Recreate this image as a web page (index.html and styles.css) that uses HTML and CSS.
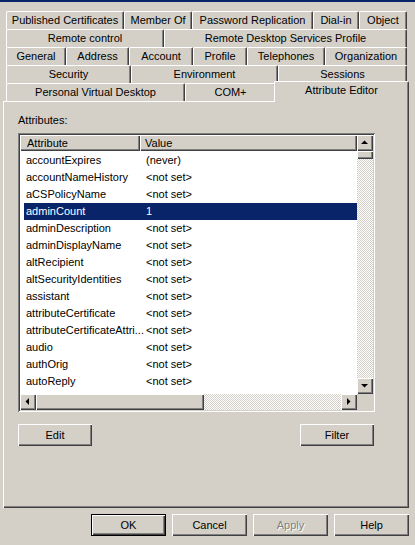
FILE: index.html
```html
<!DOCTYPE html>
<html>
<head>
<meta charset="utf-8">
<link rel="stylesheet" href="styles.css">
</head>
<body>
<div class="titlebar"></div>
<div class="tabs">
  <div class="tabrow">
    <div class="tab w118">Published Certificates</div>
    <div class="tab w68">Member Of</div>
    <div class="tab w121">Password Replication</div>
    <div class="tab w46">Dial-in</div>
    <div class="tab w48">Object</div>
  </div>
  <div class="tabrow">
    <div class="tab w158">Remote control</div>
    <div class="tab w243">Remote Desktop Services Profile</div>
  </div>
  <div class="tabrow">
    <div class="tab w60">General</div>
    <div class="tab w63">Address</div>
    <div class="tab w64">Account</div>
    <div class="tab w54">Profile</div>
    <div class="tab w78">Telephones</div>
    <div class="tab w82">Organization</div>
  </div>
  <div class="tabrow">
    <div class="tab w125">Security</div>
    <div class="tab w147">Environment</div>
    <div class="tab w129">Sessions</div>
  </div>
  <div class="tabrow">
    <div class="tab w179">Personal Virtual Desktop</div>
    <div class="tab w91">COM+</div>
    <div class="tab sel">Attribute Editor</div>
  </div>
</div>
<div class="panel">
  <div class="label">Attributes:</div>
  <div class="listbox">
    <div class="lv">
      <div class="lv-main">
        <div class="header">
          <div class="hcell hattr">Attribute</div>
          <div class="hcell hval">Value</div>
        </div>
        <div class="rows">
          <div class="row"><span class="c1">accountExpires</span><span class="c2">(never)</span></div>
          <div class="row"><span class="c1">accountNameHistory</span><span class="c2">&lt;not set&gt;</span></div>
          <div class="row"><span class="c1">aCSPolicyName</span><span class="c2">&lt;not set&gt;</span></div>
          <div class="row selected"><span class="c1">adminCount</span><span class="c2">1</span></div>
          <div class="row"><span class="c1">adminDescription</span><span class="c2">&lt;not set&gt;</span></div>
          <div class="row"><span class="c1">adminDisplayName</span><span class="c2">&lt;not set&gt;</span></div>
          <div class="row"><span class="c1">altRecipient</span><span class="c2">&lt;not set&gt;</span></div>
          <div class="row"><span class="c1">altSecurityIdentities</span><span class="c2">&lt;not set&gt;</span></div>
          <div class="row"><span class="c1">assistant</span><span class="c2">&lt;not set&gt;</span></div>
          <div class="row"><span class="c1">attributeCertificate</span><span class="c2">&lt;not set&gt;</span></div>
          <div class="row"><span class="c1">attributeCertificateAttri...</span><span class="c2">&lt;not set&gt;</span></div>
          <div class="row"><span class="c1">audio</span><span class="c2">&lt;not set&gt;</span></div>
          <div class="row"><span class="c1">authOrig</span><span class="c2">&lt;not set&gt;</span></div>
          <div class="row"><span class="c1">autoReply</span><span class="c2">&lt;not set&gt;</span></div>
        </div>
      </div>
      <div class="vscroll">
        <div class="sbtn"><svg width="16" height="16" viewBox="0 0 16 16"><polygon points="4,9 11,9 7.5,5.5" fill="#000"/></svg></div>
        <div class="vthumb"></div>
        <div class="track"></div>
        <div class="sbtn"><svg width="16" height="16" viewBox="0 0 16 16"><polygon points="4,6 11,6 7.5,9.5" fill="#000"/></svg></div>
      </div>
    </div>
    <div class="hrow">
      <div class="hscroll">
        <div class="sbtn"><svg width="16" height="16" viewBox="0 0 16 16"><polygon points="9,4 9,11 5.5,7.5" fill="#000"/></svg></div>
        <div class="hthumb"></div>
        <div class="track"></div>
        <div class="sbtn"><svg width="16" height="16" viewBox="0 0 16 16"><polygon points="6,4 6,11 9.5,7.5" fill="#000"/></svg></div>
      </div>
      <div class="corner"></div>
    </div>
  </div>
  <div class="panel-buttons">
    <div class="btn pbtn">Edit</div>
    <div class="btn pbtn">Filter</div>
  </div>
</div>
<div class="dlg-buttons">
  <div class="btn dbtn default">OK</div>
  <div class="btn dbtn">Cancel</div>
  <div class="btn dbtn disabled">Apply</div>
  <div class="btn dbtn">Help</div>
</div>
</body>
</html>
```

FILE: styles.css
```css
* { box-sizing: border-box; }
html, body { margin: 0; padding: 0; }
body {
  width: 415px;
  height: 545px;
  overflow: hidden;
  background: #d4d0c8;
  font-family: "Liberation Sans", Arial, sans-serif;
  font-size: 11px;
  color: #000;
}
.titlebar { height: 2px; background: #0a246a; }

.tabs { margin-top: 9px; }
.tabrow {
  display: flex;
  height: 18px;
  padding-left: 6px;
}
.tab {
  height: 18px;
  border-top: 1px solid #fff;
  border-left: 1px solid #fff;
  border-right: 1px solid #404040;
  border-radius: 2px 2px 0 0;
  box-shadow: inset -1px 0 #808080;
  text-align: center;
  line-height: 17px;
  white-space: nowrap;
  overflow: hidden;
  background: #d4d0c8;
}
.w46 { width: 46px; } .w48 { width: 48px; } .w54 { width: 54px; }
.w60 { width: 60px; } .w63 { width: 63px; } .w64 { width: 64px; }
.w68 { width: 68px; } .w78 { width: 78px; } .w82 { width: 82px; }
.w91 { width: 91px; } .w118 { width: 118px; } .w121 { width: 121px; }
.w125 { width: 125px; } .w129 { width: 129px; } .w147 { width: 147px; }
.w158 { width: 158px; } .w179 { width: 179px; } .w243 { width: 243px; }
.tab.sel {
  width: 135px;
  height: 21px;
  margin-top: -2px;
  margin-left: -2px;
  line-height: 17px;
  position: relative;
  z-index: 2;
}

.panel {
  margin-left: 3px;
  width: 406px;
  height: 407px;
  border-top: 1px solid #fff;
  border-left: 1px solid #fff;
  box-shadow: inset -1px -1px #404040, inset -2px -2px #808080;
  padding-left: 14px;
}
.label {
  margin-top: 12px;
  height: 13px;
  line-height: 13px;
  margin-bottom: 6px;
}
.listbox {
  width: 357px;
  height: 279px;
  padding: 2px;
  box-shadow: inset 1px 1px #808080, inset -1px -1px #fff, inset 2px 2px #404040, inset -2px -2px #d4d0c8;
  background: #fff;
}
.lv { display: flex; height: 259px; }
.lv-main { width: 337px; background: #fff; }
.header { display: flex; height: 16px; }
.hcell {
  height: 16px;
  line-height: 16px;
  background: #d4d0c8;
  box-shadow: inset 1px 1px #fff, inset -1px -1px #404040, inset -2px -2px #808080;
  white-space: nowrap;
}
.hattr { width: 120px; padding-left: 7px; }
.hval { width: 217px; padding-left: 5px; }
.rows { height: 243px; overflow: hidden; padding-top: 1px; }
.row {
  display: flex;
  height: 17px;
  line-height: 17px;
  margin-left: 4px;
  padding-left: 2px;
  white-space: nowrap;
}
.row.selected { background: #0a246a; color: #fff; }
.c1 { width: 120px; overflow: hidden; }
.c2 { flex: 1; }

.vscroll { width: 16px; display: flex; flex-direction: column; }
.sbtn {
  width: 16px;
  height: 16px;
  flex: none;
  background: #d4d0c8;
  box-shadow: inset 1px 1px #fff, inset -1px -1px #404040, inset -2px -2px #808080;
}
.sbtn svg { display: block; }
.vthumb {
  height: 8px;
  flex: none;
  background: #d4d0c8;
  box-shadow: inset 1px 1px #fff, inset -1px -1px #404040, inset -2px -2px #808080;
}
.track {
  flex: 1;
  background: repeating-conic-gradient(#fff 0 25%, #d4d0c8 0 50%) 0 0 / 2px 2px;
}
.hrow { display: flex; height: 16px; }
.hscroll { width: 337px; display: flex; }
.hthumb {
  width: 168px;
  flex: none;
  background: #d4d0c8;
  box-shadow: inset 1px 1px #fff, inset -1px -1px #404040, inset -2px -2px #808080;
}
.corner { width: 16px; background: #d4d0c8; }

.btn {
  height: 22px;
  line-height: 22px;
  text-align: center;
  background: #d4d0c8;
  box-shadow: inset 1px 1px #fff, inset -1px -1px #404040, inset -2px -2px #808080;
}
.panel-buttons {
  margin-top: 12px;
  width: 356px;
  display: flex;
  justify-content: space-between;
}
.pbtn { width: 74px; }
.dlg-buttons {
  margin-top: 6px;
  display: flex;
  justify-content: flex-end;
  gap: 6px;
  padding-right: 6px;
}
.dbtn { width: 75px; }
.dbtn.default {
  box-shadow: inset 0 0 0 1px #000, inset 2px 2px #fff, inset -2px -2px #404040, inset -3px -3px #808080;
}
.dbtn.disabled { color: #808080; text-shadow: 1px 1px #fff; }
```
